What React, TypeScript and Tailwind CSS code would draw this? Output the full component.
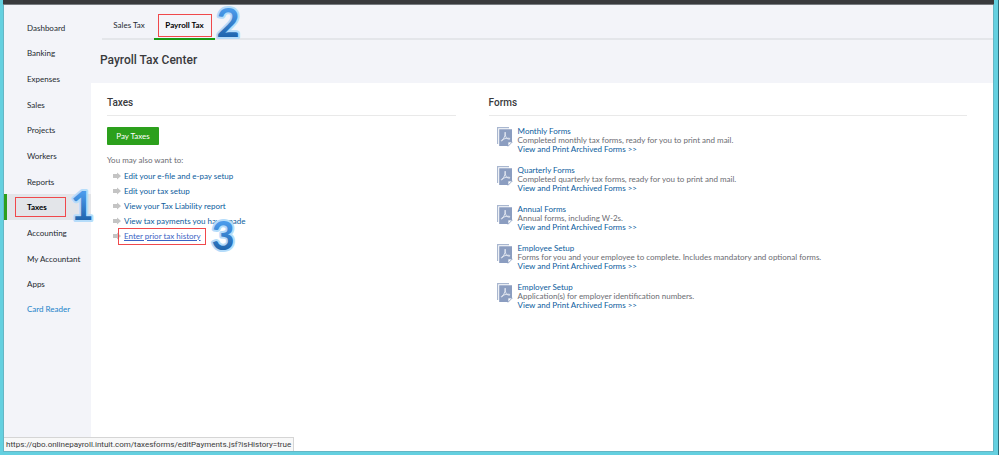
import clsx from 'clsx';

type FormEntry = {
  title: string;
  description: string;
};

const navItems = [
  'Dashboard',
  'Banking',
  'Expenses',
  'Sales',
  'Projects',
  'Workers',
  'Reports',
  'Taxes',
  'Accounting',
  'My Accountant',
  'Apps',
];

const taxLinks = [
  'Edit your e-file and e-pay setup',
  'Edit your tax setup',
  'View your Tax Liability report',
  'View tax payments you have made',
  'Enter prior tax history',
];

const forms: FormEntry[] = [
  {
    title: 'Monthly Forms',
    description: 'Completed monthly tax forms, ready for you to print and mail.',
  },
  {
    title: 'Quarterly Forms',
    description:
      'Completed quarterly tax forms, ready for you to print and mail.',
  },
  {
    title: 'Annual Forms',
    description: 'Annual forms, including W-2s.',
  },
  {
    title: 'Employee Setup',
    description:
      'Forms for you and your employee to complete. Includes mandatory and optional forms.',
  },
  {
    title: 'Employer Setup',
    description: 'Application(s) for employer identification numbers.',
  },
];

// Numbered step marker that floats over the page
function StepNumber({ value, className }: { value: number; className: string }) {
  const gradientId = `step-${value}`;

  return (
    <svg
      className={clsx(
        'pointer-events-none absolute z-10 h-12 w-7 overflow-visible',
        className
      )}
      viewBox="0 0 28 48"
      aria-hidden="true"
    >
      <defs>
        <linearGradient id={gradientId} x1="0" y1="0" x2="0" y2="1">
          <stop offset="0.25" stopColor="#4a9aea" />
          <stop offset="0.8" stopColor="#2166ae" />
        </linearGradient>
      </defs>
      <text
        x="14"
        y="38"
        textAnchor="middle"
        fontFamily="Lato, sans-serif"
        fontWeight="700"
        fontSize="40"
        fill={`url(#${gradientId})`}
        stroke="#b5dcfa"
        strokeWidth="4"
        strokeLinejoin="round"
        paintOrder="stroke"
      >
        {value}
      </text>
    </svg>
  );
}

function PdfIcon() {
  return (
    <svg className="h-5 w-4 shrink-0" viewBox="0 0 16 20" aria-hidden="true">
      <path d="M0.6 17V0.7H12" fill="none" stroke="#a9b7d0" strokeWidth="1.2" />
      <path d="M2.2 2.2H15V15L11.5 19H2.2Z" fill="#8b9dc0" />
      <path d="M11 19.3V15H15.3Z" fill="#fff" stroke="#8b9dc0" strokeWidth="0.7" />
      <path
        d="M8.2 5.2C7.4 5.4 8.4 9.3 9.4 10.8C10.2 12 12.8 12.6 13 11.8C13.1 10.8 8.4 11 5.2 12.7C3.6 13.7 4.6 14.8 5.6 13.4C7.2 11 9 6.4 8.2 5.2Z"
        fill="none"
        stroke="#f1f4f9"
        strokeWidth="0.8"
      />
    </svg>
  );
}

function ArrowIcon() {
  return (
    <svg className="h-2 w-2 shrink-0" viewBox="0 0 8 8" aria-hidden="true">
      <path d="M0 2H4V0.5L8 4L4 7.5V6H0Z" fill="#c4c4c4" />
    </svg>
  );
}

function Sidebar() {
  return (
    <nav className="w-[87px] shrink-0 bg-[#f3f4f9] pt-[10px] text-[#252a30]">
      <ul className="grid h-[282px] auto-rows-fr">
        {navItems.map((item) => {
          const isActive = item === 'Taxes';

          return (
            <li
              key={item}
              className={clsx(
                'relative flex items-center border-l-[3px] pl-5',
                isActive
                  ? 'border-[#2ca01c] bg-[#e3e5e9] font-bold text-black'
                  : 'border-transparent'
              )}
            >
              <a href="#" className="whitespace-nowrap">
                {item}
              </a>
              {isActive && (
                <>
                  <span className="absolute inset-y-[3px] left-2 w-[51px] border border-[#f0484b]" />
                  <StepNumber value={1} className="-top-3 left-[61px]" />
                </>
              )}
            </li>
          );
        })}
      </ul>
      <a href="#" className="flex h-6 items-center pl-[23px] text-[#1b83c9]">
        Card Reader
      </a>
    </nav>
  );
}

function Tabs() {
  return (
    <div className="ml-[11px] flex h-[35px] border-b-2 border-[#e4e6ea]">
      <button type="button" className="w-[52px] pt-2 pb-0.5 pl-0.5">
        Sales Tax
      </button>
      <div className="relative -mb-0.5 flex w-[61px] border-b-2 border-[#189a14]">
        <button type="button" className="flex-1 pt-2 pb-0.5 font-bold text-black">
          Payroll Tax
        </button>
        <span className="pointer-events-none absolute top-[9px] left-1 h-[23px] w-[54px] border border-[#f0484b]" />
        <StepNumber value={2} className="-top-1.5 left-[60px]" />
      </div>
    </div>
  );
}

function SectionTitle({ children }: { children: string }) {
  return (
    <h2 className="border-b border-[#e9e9e9] pb-1 font-[Roboto,sans-serif] text-[10px] leading-4 font-medium text-[#393a3d]">
      {children}
    </h2>
  );
}

export default function App() {
  return (
    <div className="flex min-h-screen flex-col border-r border-[#2c6f7e] bg-[#64d0e0] pr-1 pb-[3px] pl-[3px] font-[Lato,sans-serif] text-[8px] leading-[10px]">
      <div className="h-[5px] border-b border-[#777b80] bg-[#393a3d]" />
      <div className="relative flex flex-1 border-r border-b border-l border-[#65b6c5] bg-white">
        <Sidebar />

        <div className="min-w-0 flex-1">
          <header className="bg-[#f3f4f9] text-[#252a30]">
            <Tabs />
            <h1 className="h-[43px] pt-3 pl-[9px] font-[Roboto,sans-serif] text-[12px] leading-4 font-medium text-[#393a3d]">
              Payroll Tax Center
            </h1>
          </header>

          <main className="grid grid-cols-[349fr_479fr] gap-x-[33px] pt-3 pr-[26px] pl-4 text-[#6b6c72]">
            <section>
              <SectionTitle>Taxes</SectionTitle>
              <button
                type="button"
                className="mt-[11px] h-[18px] w-[52px] rounded-[1px] bg-[#2ca01c] text-white"
              >
                Pay Taxes
              </button>
              <p className="mt-[10px]">You may also want to:</p>
              <ul className="mt-[3px] pl-1.5">
                {taxLinks.map((link) => {
                  const isHovered = link === 'Enter prior tax history';

                  return (
                    <li
                      key={link}
                      className="relative flex h-[15px] items-center gap-[3px]"
                    >
                      <ArrowIcon />
                      <a
                        href="#"
                        className={
                          isHovered
                            ? 'text-[#3b63c4] underline'
                            : 'text-[#0b5c9c]'
                        }
                      >
                        {link}
                      </a>
                      {isHovered && (
                        <>
                          <span className="pointer-events-none absolute top-0 left-[5px] h-[17px] w-[88px] border border-[#f0484b]" />
                          <StepNumber value={3} className="-top-4 left-24" />
                        </>
                      )}
                    </li>
                  );
                })}
              </ul>
            </section>

            <section>
              <SectionTitle>Forms</SectionTitle>
              <ul className="mt-[11px] pl-2">
                {forms.map((form) => (
                  <li
                    key={form.title}
                    className="flex h-[39px] gap-[5px] leading-[9px]"
                  >
                    <PdfIcon />
                    <div>
                      <a href="#" className="block text-[#0b5c9c]">
                        {form.title}
                      </a>
                      <p>{form.description}</p>
                      <a href="#" className="block text-[#0b5c9c]">
                        View and Print Archived Forms &gt;&gt;
                      </a>
                    </div>
                  </li>
                ))}
              </ul>
            </section>
          </main>
        </div>

        {/* browser status bubble */}
        <div className="absolute bottom-0 left-0 border-t border-r border-[#d5d5d5] bg-[#f8f8f8] px-0.5 font-[Roboto,sans-serif] text-[8px] leading-[13px] text-[#3a3a3a]">
          https://qbo.onlinepayroll.intuit.com/taxesforms/editPayments.jsf?isHistory=true
        </div>
      </div>
    </div>
  );
}
